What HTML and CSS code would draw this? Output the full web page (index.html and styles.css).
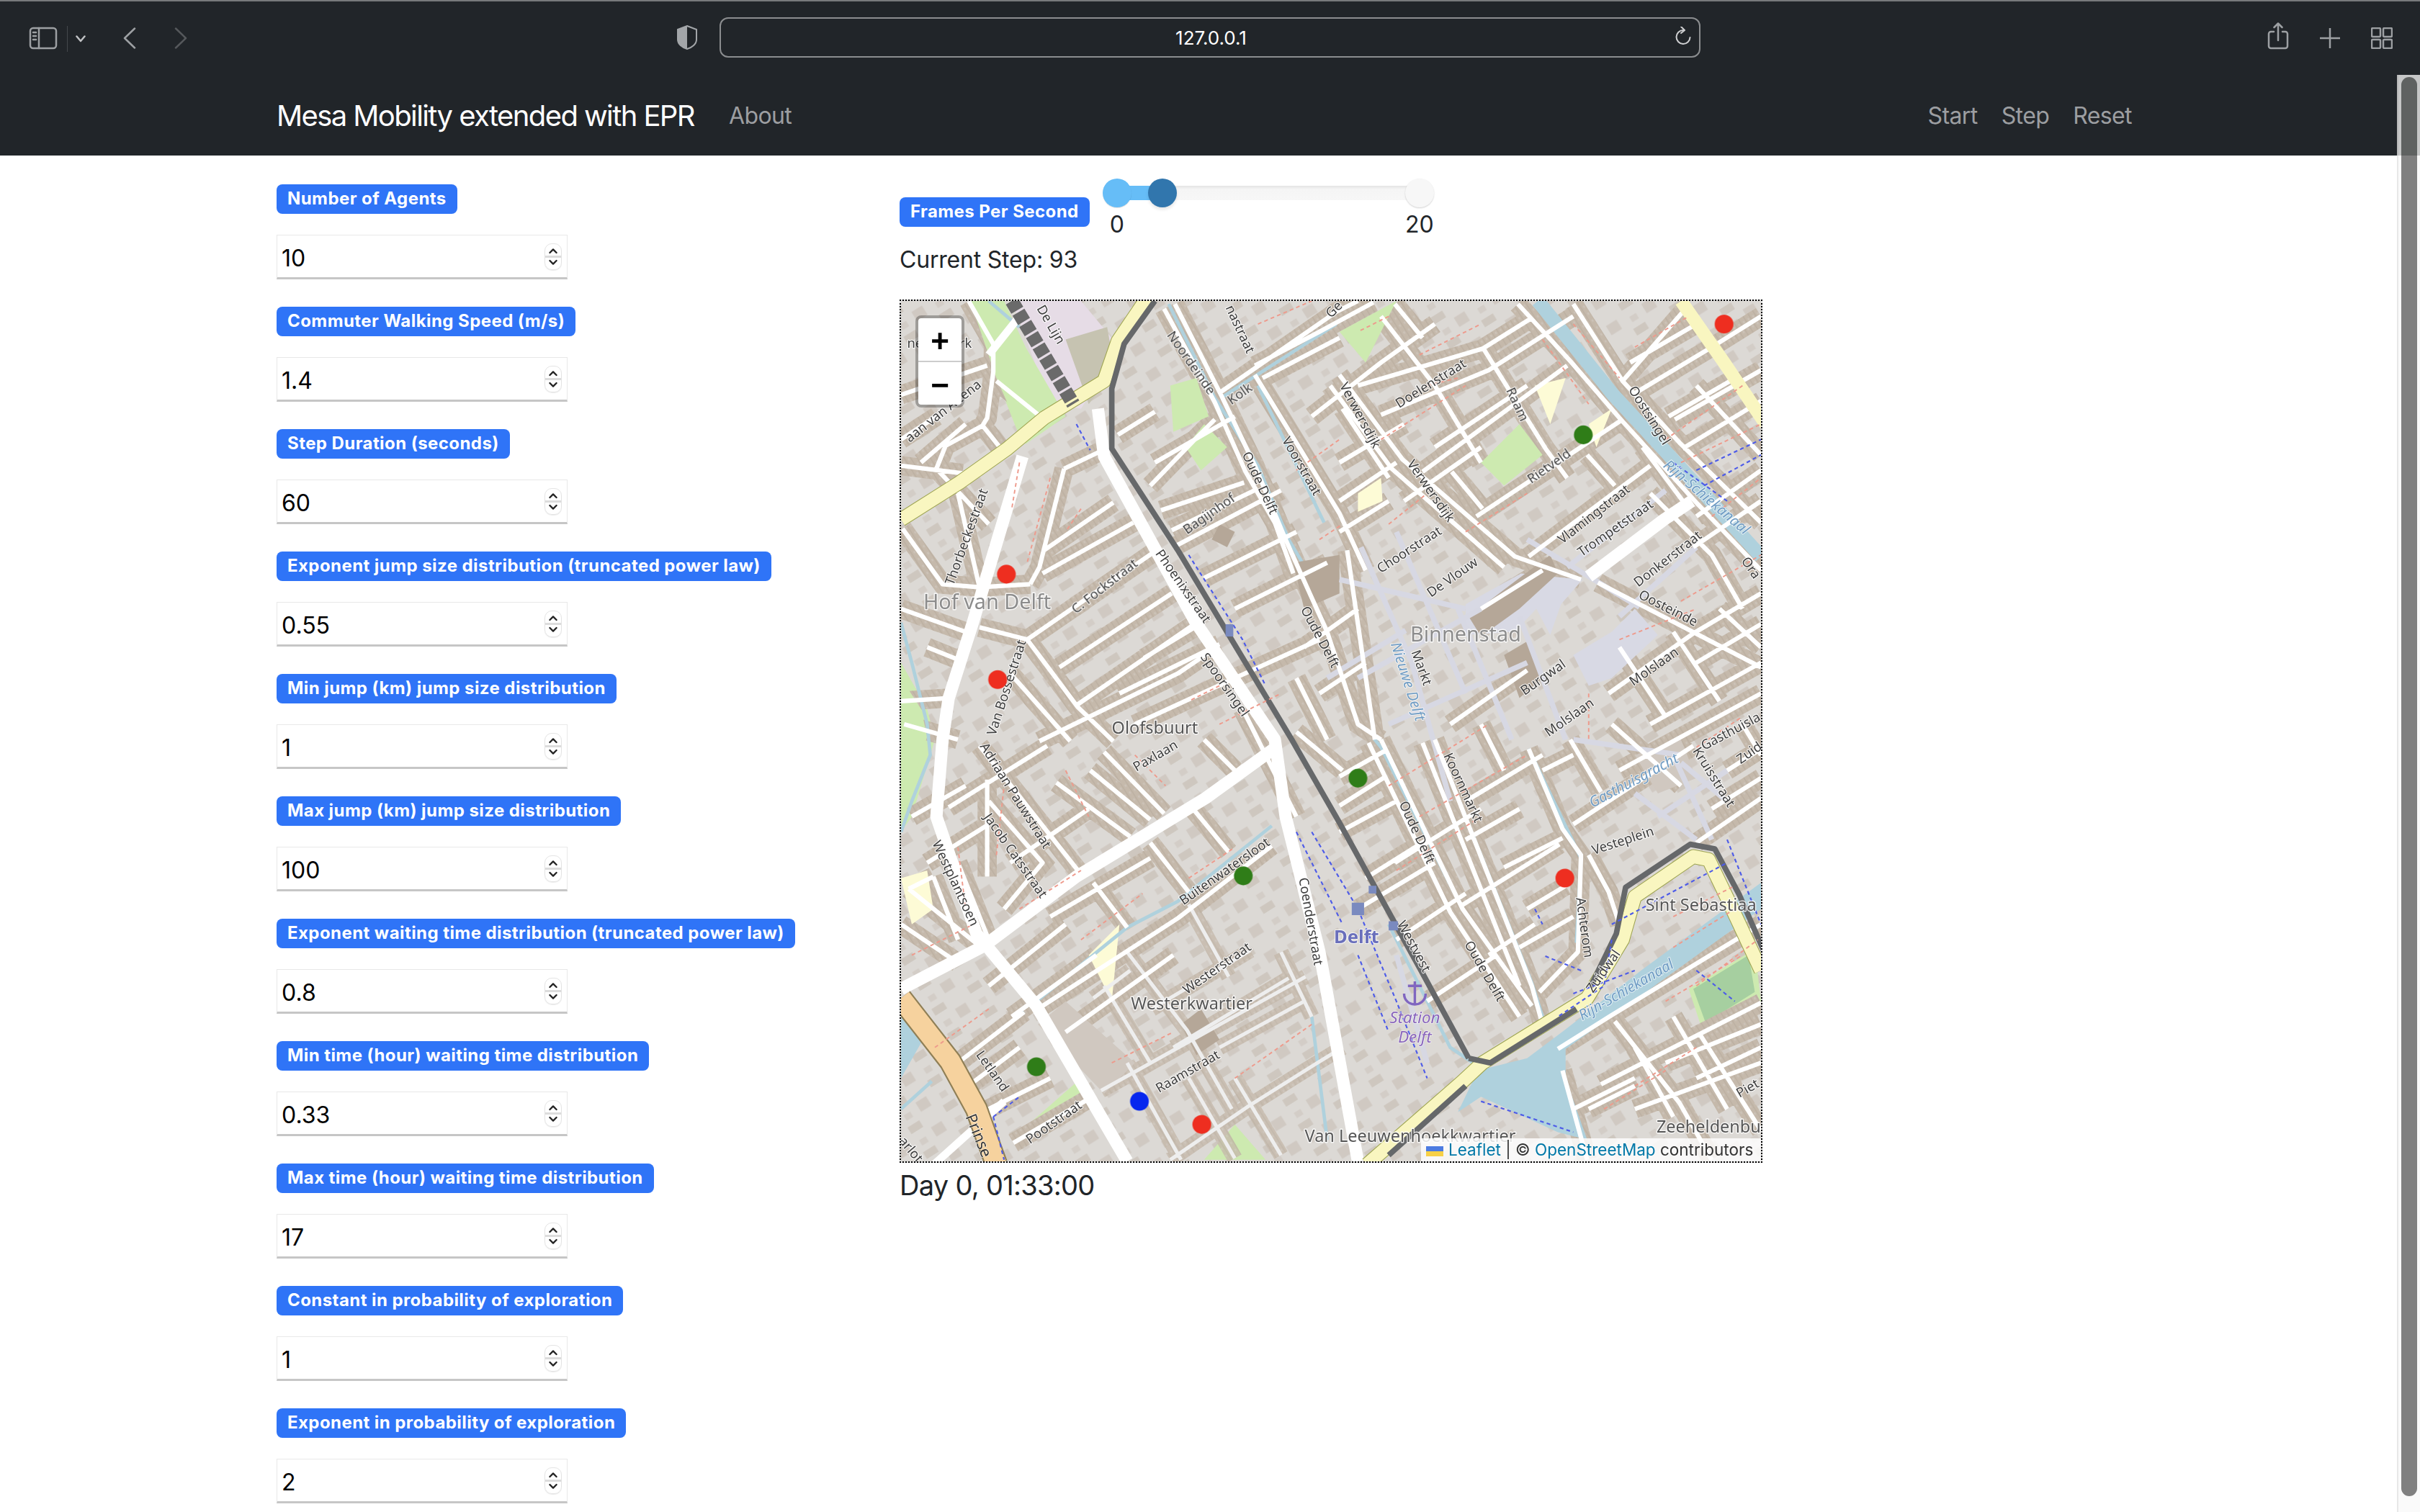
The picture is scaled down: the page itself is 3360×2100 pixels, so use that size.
FILE: index.html
```html
<!DOCTYPE html>
<html lang="en">
<head>
<meta charset="utf-8">
<title>Mesa Mobility extended with EPR</title>
<link rel="stylesheet" href="styles.css">
</head>
<body>
<header class="toolbar">
  <div class="tb-left">
    <svg class="ic ic-sidebar" width="40" height="32" viewBox="0 0 40 32"><rect x="2" y="2" width="36" height="28" rx="4"/><path d="M14 2v28M6 8h4M6 13h4M6 18h4"/></svg>
    <span class="tb-div"></span>
    <svg class="ic ic-chev" width="14" height="10" viewBox="0 0 14 10"><path d="M1.5 1.5 7 8l5.500-6.500"/></svg>
    <svg class="ic ic-back" width="18" height="30" viewBox="0 0 18 30"><path d="M16 1.500 2 15l14 13.500"/></svg>
    <svg class="ic ic-fwd" width="18" height="30" viewBox="0 0 18 30"><path d="M2 1.500 16 15 2 28.500"/></svg>
  </div>
  <svg class="shield" width="28" height="34" viewBox="0 0 28 34"><path class="shield-o" d="M14 1 27 6v14c0 6-6 11-13 13C7 31 1 26 1 20V6z"/><path class="shield-f" d="M14 1v32C7 31 1 26 1 20V6z"/></svg>
  <div class="address">
    <span class="addr-text">127.0.0.1</span>
    <svg class="ic ic-reload" width="24" height="28" viewBox="0 0 24 28"><path d="M12 5a9.500 9.500 0 1 0 9.500 10"/><path d="M9 0l5 5-5 4"/></svg>
  </div>
  <div class="tb-right">
    <svg class="ic" width="30" height="38" viewBox="0 0 30 38"><path d="M9 13H5a3 3 0 0 0-3 3v17a3 3 0 0 0 3 3h20a3 3 0 0 0 3-3V16a3 3 0 0 0-3-3h-4M15 25V2M9.500 7 15 1.500 20.500 7"/></svg>
    <svg class="ic" width="28" height="28" viewBox="0 0 28 28"><path d="M14 0v28M0 14h28"/></svg>
    <svg class="ic" width="30" height="30" viewBox="0 0 30 30"><rect x="1" y="1" width="12" height="12" rx="1.500"/><rect x="17" y="1" width="12" height="12" rx="1.500"/><rect x="1" y="17" width="12" height="12" rx="1.500"/><rect x="17" y="17" width="12" height="12" rx="1.500"/></svg>
  </div>
</header>

<nav class="navbar">
  <span class="brand">Mesa Mobility extended with EPR</span>
  <a class="nav-link about">About</a>
  <span class="nav-right">
    <a class="nav-link">Start</a>
    <a class="nav-link">Step</a>
    <a class="nav-link">Reset</a>
  </span>
</nav>

<main class="page">
  <aside class="params">
    <div class="param"><span class="badge">Number of Agents</span><div class="field"><span>10</span><span class="spin"><svg viewBox="0 0 24 36"><path d="M7 12l5-5 5 5M7 24l5 5 5-5"/></svg></span></div></div>
    <div class="param"><span class="badge">Commuter Walking Speed (m/s)</span><div class="field"><span>1.4</span><span class="spin"><svg viewBox="0 0 24 36"><path d="M7 12l5-5 5 5M7 24l5 5 5-5"/></svg></span></div></div>
    <div class="param"><span class="badge">Step Duration (seconds)</span><div class="field"><span>60</span><span class="spin"><svg viewBox="0 0 24 36"><path d="M7 12l5-5 5 5M7 24l5 5 5-5"/></svg></span></div></div>
    <div class="param"><span class="badge">Exponent jump size distribution (truncated power law)</span><div class="field"><span>0.55</span><span class="spin"><svg viewBox="0 0 24 36"><path d="M7 12l5-5 5 5M7 24l5 5 5-5"/></svg></span></div></div>
    <div class="param"><span class="badge">Min jump (km) jump size distribution</span><div class="field"><span>1</span><span class="spin"><svg viewBox="0 0 24 36"><path d="M7 12l5-5 5 5M7 24l5 5 5-5"/></svg></span></div></div>
    <div class="param"><span class="badge">Max jump (km) jump size distribution</span><div class="field"><span>100</span><span class="spin"><svg viewBox="0 0 24 36"><path d="M7 12l5-5 5 5M7 24l5 5 5-5"/></svg></span></div></div>
    <div class="param"><span class="badge">Exponent waiting time distribution (truncated power law)</span><div class="field"><span>0.8</span><span class="spin"><svg viewBox="0 0 24 36"><path d="M7 12l5-5 5 5M7 24l5 5 5-5"/></svg></span></div></div>
    <div class="param"><span class="badge">Min time (hour) waiting time distribution</span><div class="field"><span>0.33</span><span class="spin"><svg viewBox="0 0 24 36"><path d="M7 12l5-5 5 5M7 24l5 5 5-5"/></svg></span></div></div>
    <div class="param"><span class="badge">Max time (hour) waiting time distribution</span><div class="field"><span>17</span><span class="spin"><svg viewBox="0 0 24 36"><path d="M7 12l5-5 5 5M7 24l5 5 5-5"/></svg></span></div></div>
    <div class="param"><span class="badge">Constant in probability of exploration</span><div class="field"><span>1</span><span class="spin"><svg viewBox="0 0 24 36"><path d="M7 12l5-5 5 5M7 24l5 5 5-5"/></svg></span></div></div>
    <div class="param"><span class="badge">Exponent in probability of exploration</span><div class="field"><span>2</span><span class="spin"><svg viewBox="0 0 24 36"><path d="M7 12l5-5 5 5M7 24l5 5 5-5"/></svg></span></div></div>
  </aside>

  <section class="sim">
    <div class="fps">
      <span class="badge badge-fps">Frames Per Second</span>
      <div class="slider-wrap">
        <div class="slider">
          <div class="track"></div>
          <div class="fill"></div>
          <span class="thumb thumb-min"></span>
          <span class="thumb thumb-val"></span>
          <span class="thumb thumb-max"></span>
        </div>
        <div class="ticks"><span>0</span><span>20</span></div>
      </div>
    </div>
    <div class="step">Current Step: 93</div>
    <div class="map">
      <svg class="map-svg" viewBox="583 195 559 559" preserveAspectRatio="none">
        <defs>
          <pattern id="houses" width="3.600" height="5.300" patternUnits="userSpaceOnUse" patternTransform="rotate(-32)">
            <rect width="3.600" height="5.300" fill="#c5b9ab"/>
            <rect x="0" y="0" width=".7" height="5.300" fill="#bcb0a2"/>
            <rect x="1.900" y="1.800" width="1" height="1.500" fill="#cdc4ba"/>
          </pattern>
          <pattern id="block" width="27" height="19" patternUnits="userSpaceOnUse" patternTransform="rotate(-32)">
            <rect width="27" height="19" fill="#dcd9d5"/>
            <rect x="2" y="1" width="9" height="5" fill="#cec7bf"/>
            <rect x="15" y="9" width="8" height="7" fill="#d0c9c2"/>
            <rect x="4" y="12" width="5" height="4" fill="#d3cdc7"/>
          </pattern>
          <path id="minor" d="M627 195L643 223L643 241L639 271L636 276L612 289L606 304M583 256L639 237M645 247L676 272M636 276L652 296M583 302L623 307M584 343L610 379L634 381L667 379M689 304L673 368L667 379M689 304L712 293M676 357L721 326M675 372L734 339M665 415L752 355M686 433L759 385M698 457L778 402M634 407L665 415L698 459L721 481M654 437L693 481M673 481L763 437L788 420M741 427L774 407M614 453L583 455M614 524L678 484M639 506L639 569M634 484L698 565M684 508L732 543M706 500L745 532M715 488L754 528M654 560L705 525M772 524L796 553M680 595L745 557M708 573L730 602M745 547L770 579M588 577L604 569M588 577L634 614M616 693L663 657M656 742L704 714M675 653L763 596L824 549M761 197L791 256L813 302L833 350L841 368L860 410L880 470L895 480M754 200L787 261L807 306L826 339L838 372M813 243L868 333L885 370M791 254L866 202L880 195M813 237L855 215L890 196M818 245L868 219M752 331L806 313M759 344L815 317M724 282L748 267M745 315L774 285L787 272M748 300L800 270M760 355L830 318M780 375L840 345M800 395L860 365M735 470L800 440L855 415M725 450L790 418M895 480L948 590L993 653M887 482L940 592L985 660M930 480L993 640L1000 665M922 482L985 640M868 504L898 487M868 523L898 504M947 588L1011 548M975 563L1013 544M991 486L1013 538L1025 555L1023 618L998 644M1030 555L1043 579L1050 600M1020 535L1098 484M1018 480L1038 514M1100 547L1142 518M1010 681L1045 659L1142 600M1047 663L1089 716L1110 753M1038 704L1142 651M1102 671L1142 734M1013 695L1029 753M904 197L922 219M880 250L961 226L993 206M895 269L965 240L1020 205M922 306L1016 237M957 335L1052 272M1052 247L1093 200M961 225L1002 291L1016 310M941 306L961 330M1029 295L1047 315M984 197L1018 234L1050 271L1100 326L1142 370M1020 197L1052 247L1089 287L1142 339M991 361L1070 302M1082 270L1122 247M1091 291L1142 260M1086 272L1142 240M868 300L910 275M868 325L905 300M868 345L900 325M1057 235L1100 210M1043 450L1098 411L1142 385M1098 355L1142 325M1036 378L1142 433M1100 430L1142 405M1070 470L1142 430M1050 500L1142 450M868 243L909 298L982 361L1025 376M862 250L902 304L975 368M873 357L891 480M1120 500L1142 486M960 395L1000 370M940 470L990 435M950 520L1000 490M1080 690L1142 665M1060 720L1142 690M1020 720L1060 700M904 560L960 525M880 590L930 560M583 285L606 270M596 300L625 275M606 304L640 340M620 320L634 381M583 395L625 410M600 420L625 430M620 480L585 470M590 530L625 510M600 560L640 535M604 569L620 610M620 560L640 610M640 520L675 560L650 590M583 600L620 625M640 640L690 600M655 660L710 620M690 670L760 620M680 700L640 720M620 710L660 680M850 270L895 235L930 210M895 205L930 250L960 300M930 290L990 250M870 265L900 310M910 325L960 290M1060 255L1110 225L1142 205M1100 250L1142 295M1070 320L1110 360L1130 395M1100 335L1142 305M1065 290L1095 330M1050 420L1080 465M1085 410L1115 455M1115 395L1142 420M1045 470L1090 510M1110 525L1142 505M1130 470L1142 490M1060 680L1085 725M1085 660L1120 720M1100 700L1142 680M1030 720L1060 705M845 420L880 395M855 450L885 430M840 440L860 480M805 460L840 530M780 480L800 500M840 475L870 500M868 540L905 520M885 570L925 545M905 610L950 580M925 650L970 620M950 545L985 525M990 590L1015 575M965 620L995 600M985 615L1020 595M1000 500L1020 490M960 470L975 500"/>
          <path id="light" d="M730 618L769 669L798 720M708 648L732 630M713 708L846 634M758 753L809 718L852 691L870 680M770 587L796 634M746 655L810 617M760 680L835 635M790 680L845 650M800 700L830 750M770 700L800 752M730 690L765 753M830 618L850 660M715 640L745 690"/>
          <path id="ped" d="M868 376L950 395M882 355L915 430L940 520M905 345L950 450M945 395L980 480M985 400L1015 480M911 409L860 440M880 440L960 395M900 470L990 430M1063 394L1030 374M1050 400L1100 355M1030 374L990 350M1016 368L1080 318M1090 495L1120 520M1075 530L1120 500M1020 480L1090 490M1085 490L1110 545M1060 515L1100 545M905 620L925 690"/>
        </defs>

        <g class="tiles">
          <rect class="ground" x="583" y="195" width="559" height="559"/>
          <rect class="blocks" x="583" y="195" width="559" height="559"/>

          <path class="green" d="M640 195L690 270L662 288L645 245L628 200ZM583 430L600 460L605 480L590 530L583 540ZM1095 642L1138 616L1142 650L1105 672ZM820 753L780 753L800 730ZM660 735L700 700L710 712L680 735Z"/>
          <path class="green-dark" d="M1098 642L1134 620L1138 644L1106 664Z"/>
          <path class="yard" d="M655 195L700 195L725 225L700 265L680 262Z"/>
          <path class="tan" d="M690 220L717 212L722 240L705 262Z"/>

          <use href="#minor" class="casing"/>
          <use href="#light" class="casing-thin"/>

          <path class="green" d="M628 195L650 195L664 225L690 270L664 288L645 245ZM758 250L775 245L783 270L760 280ZM780 275L795 290L778 305L768 290ZM960 300L985 275L1000 295L975 315ZM868 215L905 195L885 235ZM600 478L590 510L583 520L583 440L596 460Z"/>
          <path class="cream" d="M995 250L1015 245L1005 275ZM880 320L895 310L896 325L880 332ZM1030 275L1045 265L1035 290ZM583 570L600 565L604 590L590 600ZM705 620L725 600L720 650Z"/>
          <path class="hall" d="M690 650L735 690L715 710L672 665ZM1090 480L1100 505L1075 515L1060 490Z"/>
          <path class="water" d="M990 687L1014 669L1064 630L1142 573L1142 590L1070 642L1015 681L1015 700L1029 740L1010 735L960 712L945 722L958 695Z"/>
          <path class="water" d="M583 648L600 670L583 700Z"/>
          <path class="canal-wide" d="M997 195L1046 256L1082 295L1142 361"/>
          <path class="canal" d="M757 197L787 258L815 302L835 350L848 372M815 250L858 339M868 243L909 298L982 361L1025 376M1036 378L1142 433M873 357L891 480L895 485L948 590L993 653M930 480L993 638L1000 660M991 486L1025 557L1022 612M791 258L866 210M583 404L590 430L600 470L602 490L590 520L583 540M671 650L730 602L763 585L824 536M616 693L663 657M583 720L603 702M704 714L730 753M850 660L860 740M900 600L940 680L955 690M640 195L660 212"/>

          <path class="civic" d="M950 392L986 372L1026 376L1012 392L1005 412L996 395L982 410L950 412ZM1020 425L1045 410L1060 395L1075 412L1045 440L1030 445Z"/>
          <path class="church" d="M952 400L985 375L1005 360L1010 372L985 395L960 413ZM975 425L992 415L1000 440L985 453ZM838 365L868 360L868 385L845 395ZM790 340L800 345L795 355L785 350ZM778 655L790 675L775 685L765 665Z"/>

          <use href="#ped" class="pedway"/>
          <use href="#light" class="lightway"/>
          <use href="#minor" class="road"/>
          <path class="major" d="M662 296L638 376L630 403L614 453L610 480L606 530L632 606L671 653L730 754"/>
          <path class="major" d="M828 484L781 518L697 569L637 614L583 642"/>
          <path class="major" d="M711 265L715 296L774 403L826 480L833 530L855 618L880 754"/>
          <path class="major" d="M1030 374L1079 337L1097 325"/>
          <path class="major-thin" d="M583 648L615 690M600 760L650 715M640 230L660 205"/>

          <path class="orange-case" d="M583 648L615 689L632 720L645 756"/>
          <path class="orange" d="M583 648L615 689L632 720L645 756"/>
          <path class="trunk-case" d="M583 337L621 313L652 291L676 271L715 247L724 221L743 193"/>
          <path class="trunk" d="M583 337L621 313L652 291L676 271L715 247L724 221L743 193"/>
          <path class="trunk-case" d="M886 756L947 703L961 690L1029 648L1052 610L1060 582L1098 556L1108 558L1121 585L1142 630"/>
          <path class="trunk" d="M886 756L947 703L961 690L1029 648L1052 610L1060 582L1098 556L1108 558L1121 585L1142 630"/>
          <path class="trunk" d="M1090 195L1118 235L1145 275"/>
          <path class="rail-yard" d="M655 195L695 262"/>
          <path class="rail" d="M748 195L728 223L720 252L720 291L763 357L837 480L868 534L921 630L952 687M1031 641L1048 606L1054 576L1096 548L1112 551L1128 581L1145 620M900 750L950 705M952 687L966 690L1022 655"/>
          <path class="foot" d="M660 300L655 330M680 310L665 365M700 330L690 345M790 445L770 455M900 205L880 215M920 230L960 210M925 250L945 245M895 285L950 250M1020 210L1050 245M1000 220L1030 262M1060 225L1095 205M1080 285L1130 250M1090 300L1142 275M1110 335L1142 310M1090 390L1142 360M1050 415L1100 395M1030 450L1030 480M1100 485L1130 465M905 565L960 530M920 530L990 490M900 510L965 470M660 590L700 565M770 570L800 550M720 690L760 670M700 610L740 580M800 700L850 665M1100 640L1140 610M1080 650L1130 620M1060 705L1100 680M1040 720L1080 695M1085 595L1125 575M1085 615L1125 590M590 620L630 600M605 680L640 655M645 555L650 510M620 550L625 590M690 500L705 530M735 490L755 510M790 470L830 450M900 340L925 320M950 345L990 320M840 305L868 285M855 350L870 340M815 210L850 195"/>
          <path class="bluepath" d="M697 275L706 292M770 360L805 415L820 445M1085 300L1120 325M1105 315L1142 295M1100 305L1142 285M850 540L880 590L905 650L925 700M840 540L870 600M880 620L900 670M1045 610L1040 640L1010 660M1020 645L1060 630M1045 600L1120 560M960 715L1020 735M1025 630L1000 620M643 725L650 753M643 725L660 712M1100 630L1125 650M1120 545L1142 600M995 590L1000 600"/>
          <path class="tramstop" d="M794 405h5v8h-5zM876 586h8v8h-8zM887 575h5v5h-5zM900 598h6v6h-6z"/>

          <g class="labels">
            <text class="lb" x="625" y="348" transform="rotate(-70 625 348)">Thorbeckestraat</text>
            <text class="lb" x="651" y="446" transform="rotate(-72 651 446)">Van Bossestraat</text>
            <text class="lb" x="658" y="516" transform="rotate(58 658 516)">Adriaan Pauwstraat</text>
            <text class="lb" x="658" y="555" transform="rotate(55 658 555)">Jacob Catsstraat</text>
            <text class="lb" x="619" y="573" transform="rotate(65 619 573)">Westplantsoen</text>
            <text class="lb" x="715" y="380" transform="rotate(-38 715 380)">C. Fockstraat</text>
            <text class="lb" x="767" y="380" transform="rotate(55 767 380)">Phoenixstraat</text>
            <text class="lb" x="794" y="444" transform="rotate(55 794 444)">Spoorsingel</text>
            <text class="lb" x="783" y="333" transform="rotate(-35 783 333)">Bagijnhof</text>
            <text class="lb" x="772" y="235" transform="rotate(55 772 235)">Noordeinde</text>
            <text class="lb" x="803" y="255" transform="rotate(-35 803 255)">Kolk</text>
            <text class="lb" x="817" y="313" transform="rotate(65 817 313)">Oude Delft</text>
            <text class="lb" x="844" y="302" transform="rotate(60 844 302)">Voorstraat</text>
            <text class="lb" x="856" y="413" transform="rotate(62 856 413)">Oude Delft</text>
            <text class="lb" x="681" y="210" transform="rotate(60 681 210)">De Lijn</text>
            <text class="lb" x="804" y="213" transform="rotate(65 804 213)">nastraat</text>
            <text class="lb" x="864" y="200" transform="rotate(-45 864 200)">Ge</text>
            <text class="lb" x="610" y="266" transform="rotate(-38 610 266)">aan van Altena</text>
            <text class="lb" x="608" y="222">nederpark</text>
            <text class="lb" x="927" y="248" transform="rotate(-32 927 248)">Doelenstraat</text>
            <text class="lb" x="984" y="262" transform="rotate(65 984 262)">Raam</text>
            <text class="lb" x="1004" y="302" transform="rotate(-35 1004 302)">Rietveld</text>
            <text class="lb" x="882" y="269" transform="rotate(62 882 269)">Verwersdijk</text>
            <text class="lb" x="928" y="318" transform="rotate(55 928 318)">Verwersdijk</text>
            <text class="lb" x="1070" y="269" transform="rotate(58 1070 269)">Oostsingel</text>
            <text class="lb" x="1033" y="333" transform="rotate(-38 1033 333)">Vlamingstraat</text>
            <text class="lb" x="1047" y="342" transform="rotate(-35 1047 342)">Trompetstraat</text>
            <text class="lb" x="1081" y="362" transform="rotate(-38 1081 362)">Donkerstraat</text>
            <text class="lb" x="1082" y="394" transform="rotate(27 1082 394)">Oosteinde</text>
            <text class="lb" x="1136" y="368" transform="rotate(55 1136 368)">Ora</text>
            <text class="lb" x="913" y="356" transform="rotate(-33 913 356)">Choorstraat</text>
            <text class="lb" x="941" y="374" transform="rotate(-35 941 374)">De Vlouw</text>
            <text class="lb" x="922" y="433" transform="rotate(70 922 433)">Markt</text>
            <text class="lb" x="1000" y="439" transform="rotate(-35 1000 439)">Burgwal</text>
            <text class="lb" x="1072" y="432" transform="rotate(-35 1072 432)">Molslaan</text>
            <text class="lb" x="1017" y="465" transform="rotate(-35 1017 465)">Molslaan</text>
            <text class="lb" x="1112" y="504" transform="rotate(58 1112 504)">Kruisstraat</text>
            <text class="lb" x="1134" y="488" transform="rotate(-35 1134 488)">Zuid</text>
            <text class="lb" x="1122" y="474" transform="rotate(-28 1122 474)">Gasthuisla</text>
            <text class="lb" x="949" y="511" transform="rotate(65 949 511)">Koornmarkt</text>
            <text class="lb" x="919" y="540" transform="rotate(65 919 540)">Oude Delft</text>
            <text class="lb" x="963" y="630" transform="rotate(60 963 630)">Oude Delft</text>
            <text class="lb" x="1052" y="545" transform="rotate(-18 1052 545)">Vesteplein</text>
            <text class="lb" x="1028" y="602" transform="rotate(82 1028 602)">Achterom</text>
            <text class="lb" x="917" y="614" transform="rotate(62 917 614)">Westvest</text>
            <text class="lb" x="1039" y="630" transform="rotate(-55 1039 630)">Zuidwal</text>
            <text class="lb" x="850" y="598" transform="rotate(80 850 598)">Coenderstraat</text>
            <text class="lb" x="793" y="565" transform="rotate(-35 793 565)">Buitenwatersloot</text>
            <text class="lb" x="788" y="628" transform="rotate(-35 788 628)">Westerstraat</text>
            <text class="lb" x="769" y="695" transform="rotate(-30 769 695)">Raamstraat</text>
            <text class="lb" x="643" y="695" transform="rotate(55 643 695)">Letland</text>
            <text class="lb" x="682" y="728" transform="rotate(-35 682 728)">Pootstraat</text>
            <text class="lb lb-big" x="634" y="737" transform="rotate(68 634 737)">Prinse</text>
            <text class="lb" x="748" y="490" transform="rotate(-30 748 490)">Paxlaan</text>
            <text class="lb" x="590" y="746" transform="rotate(50 590 746)">arlot</text>
            <text class="lb" x="1133" y="706" transform="rotate(-30 1133 706)">Piet</text>
            <text class="wt" x="913" y="442" transform="rotate(72 913 442)">Nieuwe Delft</text>
            <text class="wt" x="1107" y="322" transform="rotate(40 1107 322)">Rijn-Schiekanaal</text>
            <text class="wt" x="1059" y="506" transform="rotate(-28 1059 506)">Gasthuisgracht</text>
            <text class="wt" x="1054" y="642" transform="rotate(-30 1054 642)">Rijn-Schiekanaal</text>
            <text class="pl pl-big" x="639" y="390">Hof van Delft</text>
            <text class="pl pl-big" x="950" y="411">Binnenstad</text>
            <text class="pl" x="748" y="472">Olofsbuurt</text>
            <text class="pl" x="772" y="651">Westerkwartier</text>
            <text class="pl" x="1103" y="587">Sint Sebastiaa</text>
            <text class="pl" x="1108" y="731">Zeeheldenbu</text>
            <text class="pl" x="914" y="737">Van Leeuwenhoekkwartier</text>
            <text class="stn" x="879" y="608">Delft</text>
            <text class="stn-i" x="917" y="660">Station</text>
            <text class="stn-i" x="917" y="673">Delft</text>
            <path class="anchor" d="M917 637v15M912.500 640h9M910 645c0 5 4 7 7 7s7-2 7-7"/>
          </g>
        </g>

        <g>
          <circle class="dot red" cx="651.500" cy="372.500" r="6.100"/>
          <circle class="dot red" cx="645.800" cy="441" r="6.100"/>
          <circle class="dot red" cx="1118" cy="210" r="6.100"/>
          <circle class="dot red" cx="1014.500" cy="570" r="6.100"/>
          <circle class="dot red" cx="778.500" cy="730" r="6.100"/>
          <circle class="dot grn" cx="1026.500" cy="282" r="6.100"/>
          <circle class="dot grn" cx="880" cy="505" r="6.100"/>
          <circle class="dot grn" cx="805.500" cy="568.500" r="6.100"/>
          <circle class="dot grn" cx="671" cy="692.500" r="6.100"/>
          <circle class="dot blu" cx="738" cy="715" r="6.100"/>
        </g>
      </svg>
      <div class="zoom">
        <span class="zoom-btn">+</span>
        <span class="zoom-btn">−</span>
      </div>
      <div class="attrib"><span class="flag"></span><a class="attrib-link">Leaflet</a> | © <a class="attrib-link">OpenStreetMap</a> contributors</div>
    </div>
    <div class="daytime">Day 0, 01:33:00</div>
  </section>
</main>

<div class="scrollbar"><div class="scroll-thumb"></div></div>
</body>
</html>
```
FILE: styles.css
```css
* { box-sizing: border-box; }
html, body { margin: 0; height: 2100px; overflow: hidden; }
body { font-family: Inter, "Noto Sans", "Liberation Sans", sans-serif; background: #fff; color: #212529; position: relative; }

.toolbar { height: 104px; background: #212529; border-top: 2px solid #77797b; display: flex; align-items: flex-start; position: relative; }
.ic { fill: none; stroke: #9da0a3; stroke-width: 2.500; stroke-linecap: round; stroke-linejoin: round; display: block; flex: none; }
.tb-left { width: 940px; height: 100%; display: flex; align-items: flex-start; padding: 34px 0 0 40px; }
.ic-sidebar { margin-top: 1px; }
.tb-div { width: 1px; height: 36px; background: #45484c; margin: 0 11px 0 13px; }
.ic-chev { margin-top: 13px; stroke: #c0c2c4; }
.ic-back { margin: 2px 0 0 52px; }
.ic-fwd { margin: 2px 0 0 53px; stroke: #55585b; }
.shield { flex: none; margin-top: 33px; }
.shield-o { fill: none; stroke: #a3a6a9; stroke-width: 2; }
.shield-f { fill: #a3a6a9; }
.address { width: 1362px; height: 56px; margin: 22px 0 0 31px; flex: none; border: 2px solid #8b8d8f; border-radius: 12px; display: flex; align-items: center; justify-content: center; position: relative; }
.addr-text { color: #fff; font-size: 26px; margin-left: 3px; }
.ic-reload { position: absolute; right: 10px; top: 11px; stroke: #cfd0d2; stroke-width: 2; }
.tb-right { margin-left: auto; padding: 29px 38px 0 0; display: flex; align-items: flex-start; gap: 43px; }
.tb-right .ic:nth-child(2) { margin-top: 8px; }
.tb-right .ic:nth-child(3) { margin-top: 7px; }

.navbar { height: 112px; background: #212529; display: flex; align-items: center; padding: 0 400px 0 384px; }
.brand { color: #fff; font-size: 40px; letter-spacing: -1.600px; white-space: nowrap; }
.nav-link { color: #9c9ea1; font-size: 32px; letter-spacing: -0.600px; }
.about { margin-left: 48px; }
.nav-right { margin-left: auto; display: flex; gap: 33px; }

.page { display: flex; }
.params { width: 1249px; padding: 40px 0 0 384px; flex: none; display: flex; flex-direction: column; gap: 38px; }
.param { display: flex; flex-direction: column; align-items: flex-start; gap: 29px; }
.badge { background: #2f74f7; color: #fff; font-size: 24px; font-weight: 700; height: 41px; line-height: 39px; padding: 0 15px; border-radius: 8px; white-space: nowrap; letter-spacing: .43px; }
.field { width: 404px; height: 62px; border: 1px solid #e8e8e8; border-bottom: 3px solid #c6c6c6; display: flex; align-items: center; justify-content: space-between; padding: 5px 7px 0 6px; color: #000; font-size: 32px; }
.spin { width: 24px; height: 37px; border: 1px solid #e4e4e4; border-radius: 10px; background: linear-gradient(#fff 0 47%, #dcdcdc 47% 53%, #fff 53%); display: block; box-shadow: 0 1px 1px rgba(0,0,0,.08); margin-top: -5px; }
.spin svg { display: block; width: 100%; height: 100%; fill: none; stroke: #222; stroke-width: 2.500; stroke-linecap: round; stroke-linejoin: round; }

.sim { padding-top: 32px; width: 1202px; flex: none; }
.fps { display: flex; align-items: flex-start; gap: 18px; }
.badge-fps { margin-top: 26px; }
.slider-wrap { width: 460px; }
.slider { height: 40px; position: relative; }
.track { position: absolute; left: 20px; right: 20px; top: 10px; height: 20px; background: linear-gradient(#e4e4e4, #f5f5f5 25%, #f7f7f7); }
.fill { position: absolute; left: 20px; width: 64px; top: 10px; height: 20px; background: #66bdf7; }
.thumb { position: absolute; top: 0; width: 40px; height: 40px; border-radius: 50%; }
.thumb-min { left: 0; background: #66bdf7; box-shadow: 0 1px 1px rgba(0,0,0,.12); }
.thumb-val { left: 63px; background: #3176ad; box-shadow: 0 3px 4px rgba(0,0,0,.1); }
.thumb-max { right: 0; background: #f7f7f7; box-shadow: 0 1px 2px rgba(0,0,0,.18); }
.ticks { display: flex; justify-content: space-between; font-size: 32px; line-height: 40px; padding-left: 10px; margin-top: 4px; }
.step { font-size: 32px; line-height: 48px; margin-top: 5px; letter-spacing: -0.200px; }

.map { width: 1198px; height: 1199px; margin-top: 31px; border: 2px dotted #000; position: relative; overflow: hidden; background: #ddd; }
.map-svg { display: block; width: 100%; height: 100%; }
.tiles { filter: blur(.22px); }
.ground { fill: #dcd9d5; }
.blocks { fill: url(#block); }
.casing { fill: none; stroke: url(#houses); stroke-width: 12.500; }
.casing-thin { fill: none; stroke: url(#houses); stroke-width: 10; opacity: .8; }
.green { fill: #cdeab0; }
.green-dark { fill: #a6cfa0; }
.yard { fill: #e6dce6; }
.tan { fill: #c6c3b1; }
.cream { fill: #fdfbd6; }
.hall { fill: #d0c8c0; }
.water { fill: #afd1dd; }
.canal-wide { fill: none; stroke: #afd1dd; stroke-width: 9; }
.canal { fill: none; stroke: #afd1dd; stroke-width: 2.200; }
.church { fill: #b5a798; }
.civic { fill: #d8d9e4; }
.pedway { fill: none; stroke: #d7d8e3; stroke-width: 3.500; }
.lightway { fill: none; stroke: #eeeeee; stroke-width: 2.400; }
.road { fill: none; stroke: #fff; stroke-width: 2.900; stroke-linejoin: round; }
.major { fill: none; stroke: #fff; stroke-width: 8; stroke-linejoin: round; }
.major-thin { fill: none; stroke: #fff; stroke-width: 5; }
.orange-case { fill: none; stroke: #8f7f56; stroke-width: 15; }
.orange { fill: none; stroke: #f6d29e; stroke-width: 13; }
.trunk-case { fill: none; stroke: #9fa552; stroke-width: 9.500; stroke-linejoin: round; }
.trunk { fill: none; stroke: #f9f6c0; stroke-width: 8.500; stroke-linejoin: round; }
.rail { fill: none; stroke: #66686a; stroke-width: 3.600; stroke-linejoin: round; }
.rail-yard { fill: none; stroke: #6a6a6a; stroke-width: 9; stroke-dasharray: 7 1.500; }
.foot { fill: none; stroke: #ee9a8c; stroke-width: .9; stroke-dasharray: 2.500 2; }
.bluepath { fill: none; stroke: #4d5be8; stroke-width: 1; stroke-dasharray: 2.500 2; }
.tramstop { fill: #7a8abf; }
.lb, .wt, .pl, .stn, .stn-i { font-family: "Noto Sans", "DejaVu Sans", sans-serif; text-anchor: middle; dominant-baseline: central; paint-order: stroke; stroke-linejoin: round; }
.lb { font-size: 8.600px; fill: #3e3e3e; stroke: #fff; stroke-width: 1.100px; stroke-opacity: .8; }
.lb-big { font-size: 10px; fill: #333; stroke-width: .6px; }
.wt { font-size: 9.500px; font-style: italic; fill: #6f9cc4; stroke: #fff; stroke-width: 1px; stroke-opacity: .65; }
.pl { font-size: 11px; fill: #565656; stroke: #fff; stroke-width: 1.300px; stroke-opacity: .8; }
.pl-big { font-size: 13.500px; fill: #8c8c8c; }
.stn { font-size: 12px; font-weight: 700; fill: #6a6fbb; stroke: #fff; stroke-width: 1px; stroke-opacity: .8; }
.stn-i { font-size: 10.500px; font-style: italic; fill: #8a66bd; stroke: #fff; stroke-width: .8px; stroke-opacity: .6; }
.anchor { fill: none; stroke: #8066c0; stroke-width: 1.600; }
.dot { stroke: none; }
.red { fill: #ee2e20; }
.grn { fill: #2f7d18; }
.blu { fill: #0626ee; }

.zoom { position: absolute; left: 20px; top: 20px; width: 68px; height: 128px; border: 4px solid rgba(0,0,0,.28); border-radius: 8px; background: #fff; display: flex; flex-direction: column; background-clip: padding-box; }
.zoom-btn { flex: 1; display: flex; align-items: center; justify-content: center; font: 700 44px "Liberation Sans", sans-serif; color: #000; padding-top: 4px; }
.zoom-btn:first-child { border-bottom: 2px solid #ccc; }
.attrib { position: absolute; right: 0; bottom: 0; height: 32px; width: 472px; padding: 0 0 0 7px; background: rgba(255,255,255,.82); font-size: 22.500px; line-height: 32px; color: #333; white-space: nowrap; overflow: hidden; }
.flag { display: inline-block; vertical-align: -1px; width: 24px; height: 14px; background: linear-gradient(#4c7be1 0 50%, #f7d046 50%); margin-right: 7px; }
.attrib-link { color: #0078a8; }
.daytime { font-size: 38px; line-height: 48px; margin-top: 7px; letter-spacing: -0.700px; }

.scrollbar { position: absolute; top: 104px; right: 0; bottom: 0; width: 32px; background: linear-gradient(#c6c7c7 0 112px, #fafafa 112px); border-left: 2px solid rgba(0,0,0,.07); padding: 3px 4px 0 4px; }
.scroll-thumb { width: 22px; height: 1971px; border-radius: 11px; background: linear-gradient(#5f6261 0 109px, #808080 109px); }
```
